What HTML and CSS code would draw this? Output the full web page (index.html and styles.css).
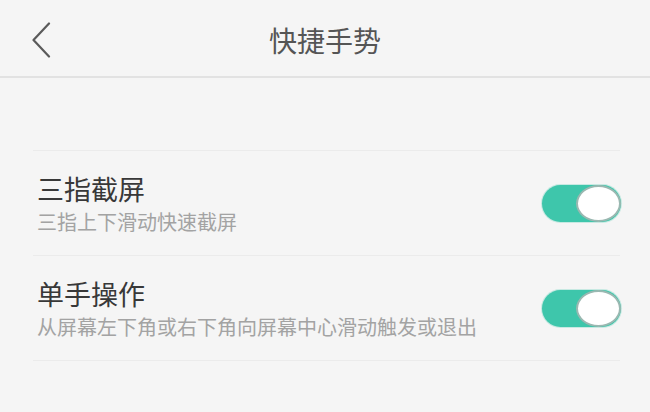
FILE: index.html
```html
<!DOCTYPE html>
<html lang="zh-CN">
<head>
<meta charset="utf-8">
<title>快捷手势</title>
<link rel="stylesheet" href="styles.css">
</head>
<body>
<div class="page">
  <header class="header">
    <div class="back">
      <svg width="20" height="36" viewBox="0 0 20 36" aria-hidden="true">
        <path d="M18 1.5 L2.5 18 L18 34.5" fill="none" stroke="#5a5a5a" stroke-width="2.2" stroke-linecap="round" stroke-linejoin="round"/>
      </svg>
    </div>
    <h1 class="title">快捷手势</h1>
    <div class="spacer"></div>
  </header>
  <main class="list">
    <div class="row">
      <div class="text">
        <div class="row-title">三指截屏</div>
        <div class="row-sub">三指上下滑动快速截屏</div>
      </div>
      <div class="switch on"><span class="knob"></span></div>
    </div>
    <div class="row">
      <div class="text">
        <div class="row-title">单手操作</div>
        <div class="row-sub">从屏幕左下角或右下角向屏幕中心滑动触发或退出</div>
      </div>
      <div class="switch on"><span class="knob"></span></div>
    </div>
  </main>
</div>
</body>
</html>
```
FILE: styles.css
```css
html, body {
  margin: 0;
  padding: 0;
  background: #f5f5f5;
}
body {
  width: 650px;
  height: 412px;
  overflow: hidden;
  font-family: "Noto Sans CJK SC", "Noto Sans", sans-serif;
}
.page {
  display: flex;
  flex-direction: column;
}
.header {
  height: 78px;
  padding-top: 4px;
  box-sizing: border-box;
  border-bottom: 2px solid #e2e2e2;
  display: flex;
  align-items: center;
  padding-left: 31px;
  padding-right: 31px;
}
.back {
  width: 20px;
  height: 36px;
  display: flex;
}
.spacer {
  width: 20px;
}
.title {
  flex: 1;
  margin: 0;
  text-align: center;
  font-size: 28px;
  font-weight: normal;
  color: #555555;
  line-height: 36px;
}
.list {
  margin: 72px 30px 0 33px;
  border-bottom: 1px solid #ebebeb;
}
.row {
  height: 104px;
  border-top: 1px solid #ebebeb;
  display: flex;
  align-items: center;
  justify-content: space-between;
}
.text {
  display: flex;
  flex-direction: column;
  padding-left: 4px;
}
.row-title {
  font-size: 27px;
  line-height: 36px;
  color: #383838;
}
.row-sub {
  font-size: 20px;
  line-height: 26px;
  color: #a3a3a3;
  margin-top: 2px;
}
.switch {
  width: 79px;
  height: 37px;
  border-radius: 19px;
  background: #3ec6ab;
  box-shadow: 0 0 0 1px rgba(62, 198, 171, 0.25);
  display: flex;
  justify-content: flex-end;
  box-sizing: border-box;
  margin-right: -1px;
}
.knob {
  width: 45px;
  height: 37px;
  box-sizing: border-box;
  border-radius: 50%;
  background: #ffffff;
  border: 2px solid #9ab8b1;
}
```
